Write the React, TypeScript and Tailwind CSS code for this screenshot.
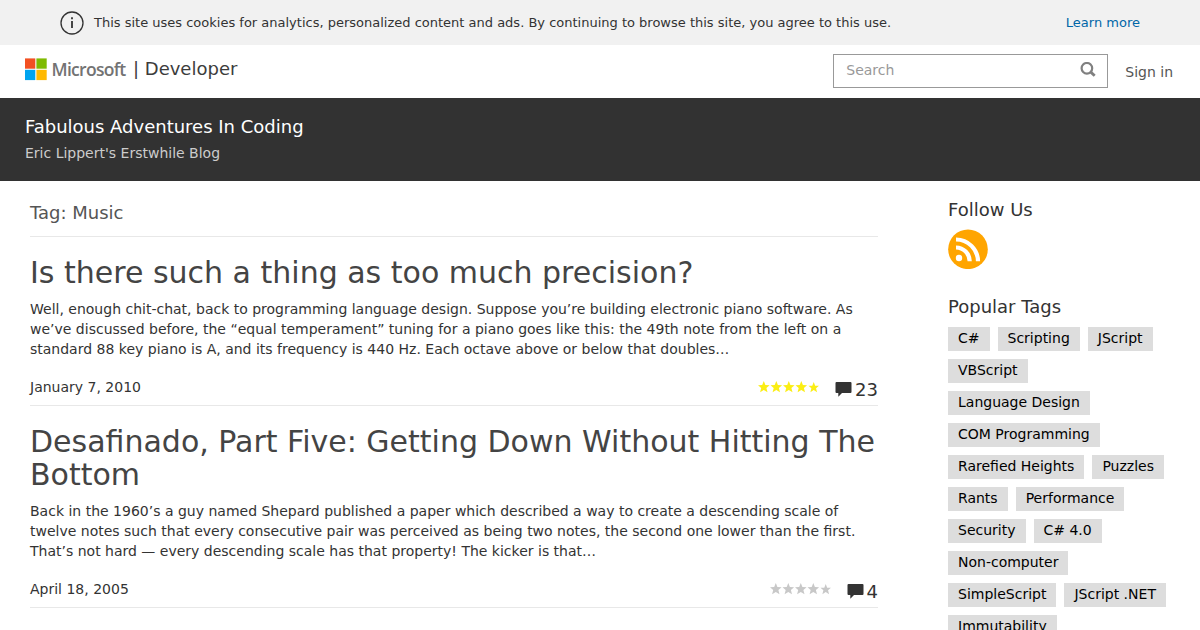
import React from "react";

type Post = {
    title: string;
    excerpt: string;
    date: string;
    comments: number;
    rated: boolean;
};

const posts: Post[] = [
    {
        title: "Is there such a thing as too much precision?",
        excerpt: "Well, enough chit-chat, back to programming language design. Suppose you’re building electronic piano software. As we’ve discussed before, the “equal temperament” tuning for a piano goes like this: the 49th note from the left on a standard 88 key piano is A, and its frequency is 440 Hz. Each octave above or below that doubles…",
        date: "January 7, 2010",
        comments: 23,
        rated: true
    },
    {
        title: "Desafinado, Part Five: Getting Down Without Hitting The Bottom",
        excerpt: "Back in the 1960’s a guy named Shepard published a paper which described a way to create a descending scale of twelve notes such that every consecutive pair was perceived as being two notes, the second one lower than the first. That’s not hard — every descending scale has that property! The kicker is that…",
        date: "April 18, 2005",
        comments: 4,
        rated: false
    }
];

const tags = [
    "C#", "Scripting", "JScript", "VBScript", "Language Design", "COM Programming",
    "Rarefied Heights", "Puzzles", "Rants", "Performance", "Security", "C# 4.0",
    "Non-computer", "SimpleScript", "JScript .NET", "Immutability"
];

function Stars({ rated }: { rated: boolean }) {
    return (
        <svg width="62" height="12" viewBox="0 0 62 12" className={rated ? "fill-[#fbee14]" : "fill-[#c8c8c8]"}>
            {[0, 1, 2, 3, 4].map(i => (
                <path
                    key={i}
                    transform={i === 4 ? "translate(50.5 1) scale(0.9)" : `translate(${i * 12.5} 0)`}
                    d="M5.8 0.1 7.4 4.1 11.6 4.3 8.4 7 9.5 11.3 5.8 9 2.1 11.3 3.2 7 0 4.3 4.2 4.1Z"
                />
            ))}
        </svg>
    );
}

function PostItem({ post }: { post: Post }) {
    return (
        <article className="border-b border-[#e8e8e8] pt-[19px]">
            <h2 className="text-[30px] leading-[33px] text-[#444444]">{post.title}</h2>
            <p className="mt-2.5 text-sm leading-5 text-[#333333]">{post.excerpt}</p>
            <div className="mt-[18px] flex h-7 justify-between">
                <span className="text-sm leading-5 text-[#333333]">{post.date}</span>
                <div className="flex items-start">
                    <div className="mt-1 mr-[15px]"><Stars rated={post.rated} /></div>
                    <svg width="17" height="15" viewBox="0 0 17 15" className="mt-[5px] mr-[3px] fill-[#333333]">
                        <path d="M1.5 0H15.5Q16.5 0 16.5 1V10Q16.5 11 15.5 11H7L3.3 14.8V11H1.5Q0.5 11 0.5 10V1Q0.5 0 1.5 0Z" />
                    </svg>
                    <span className="mt-[3px] text-lg leading-5 text-[#333333]">{post.comments}</span>
                </div>
            </div>
        </article>
    );
}

function App() {
    return (
        <div className="h-[630px] w-[1200px] overflow-hidden bg-white font-['DejaVu_Sans',sans-serif] text-[#333333]">
            <div className="flex h-[45px] items-center bg-[#f1f1f1] pl-[60px] pr-[60px] text-[13px]">
                <svg width="24" height="24" viewBox="0 0 24 24" fill="none" stroke="#333333" className="mr-[10px]">
                    <circle cx="12" cy="12" r="11" strokeWidth="1.3" />
                    <path d="M12 10V17" strokeWidth="1.8" />
                    <path d="M12 6.3V8.2" strokeWidth="1.8" />
                </svg>
                <span>This site uses cookies for analytics, personalized content and ads. By continuing to browse this site, you agree to this use.</span>
                <a className="ml-auto text-[#0067a8]">Learn more</a>
            </div>

            <header className="flex h-[53px] items-start pl-[25px]">
                <svg width="22" height="23" viewBox="0 0 22 23" className="mt-[13px]">
                    <path fill="#f25022" d="M0 0.4h10.3v10.3H0z" />
                    <path fill="#7fba00" d="M11.4 0.4h10.3v10.3H11.4z" />
                    <path fill="#00a4ef" d="M0 11.8h10.3v10.3H0z" />
                    <path fill="#ffb900" d="M11.4 11.8h10.3v10.3H11.4z" />
                </svg>
                <span className="ml-[4.5px] mt-3 w-[75.5px] whitespace-nowrap font-['Open_Sans',sans-serif] text-[17.5px] font-semibold leading-6 tracking-[-0.7px] text-[#737373]">Microsoft</span>
                <span className="ml-[6px] mt-[13px] text-lg leading-[22px] text-[#3c3c3c]">| Developer</span>
                <div className="ml-auto mt-[9px] flex h-[34px] w-[275px] justify-between border border-[#999999] pl-3 pr-[11px]">
                    <span className="text-sm leading-[31px] text-[#999999]">Search</span>
                    <svg width="16" height="16" viewBox="0 0 16 16" fill="none" stroke="#808080" className="mt-[7px]">
                        <circle cx="6.9" cy="6.3" r="5.3" strokeWidth="2.2" />
                        <path d="M10.5 9.9 14.7 13.8" strokeWidth="2.8" />
                    </svg>
                </div>
                <a className="ml-[17px] mr-[27px] mt-[17px] text-sm leading-5 text-[#555555]">Sign in</a>
            </header>

            <div className="h-[83px] bg-[#323232] pl-[25px] pt-[18px]">
                <h1 className="text-lg leading-[22px] text-white">Fabulous Adventures In Coding</h1>
                <p className="mt-[5px] text-sm leading-5 text-[#cccccc]">Eric Lippert's Erstwhile Blog</p>
            </div>

            <div className="flex">
                <main className="ml-[30px] w-[848px]">
                    <div className="h-14 border-b border-[#e8e8e8] pt-[22px] text-lg leading-5 text-[#555555]">Tag: Music</div>
                    {posts.map(post => <PostItem key={post.title} post={post} />)}
                </main>
                <aside className="ml-[70px] w-[222px]">
                    <h3 className="mt-[19px] text-lg leading-5">Follow Us</h3>
                    <svg width="40" height="40" viewBox="0 0 40 40" className="mt-[9px]">
                        <circle cx="20" cy="20.3" r="19.8" fill="#ffa500" />
                        <circle cx="11" cy="29" r="3.2" fill="#ffffff" />
                        <path d="M8 18.5A13.8 13.8 0 0 1 21.7 32.3M8 10.5A22 22 0 0 1 30 32.3" fill="none" stroke="#ffffff" strokeWidth="4.2" />
                    </svg>
                    <h3 className="mt-7 text-lg leading-5">Popular Tags</h3>
                    <div className="mt-2.5 flex flex-wrap gap-2">
                        {tags.map(tag => (
                            <a key={tag} className="h-6 bg-[#dddddd] px-2.5 text-sm leading-[22px] text-black">{tag}</a>
                        ))}
                    </div>
                </aside>
            </div>
        </div>
    );
}
export default App;
